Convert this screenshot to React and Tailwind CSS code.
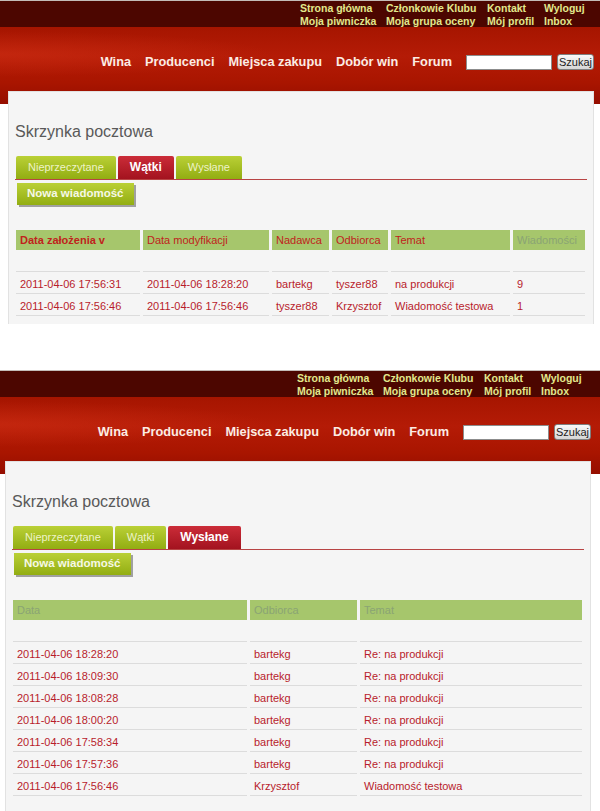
import React from "react";

const topLinks = [
  "Strona główna",
  "Członkowie Klubu",
  "Kontakt",
  "Wyloguj",
  "Moja piwniczka",
  "Moja grupa oceny",
  "Mój profil",
  "Inbox",
];

const mainNav = ["Wina", "Producenci", "Miejsca zakupu", "Dobór win", "Forum"];

const tabs = ["Nieprzeczytane", "Wątki", "Wysłane"];

const threadColumns = [
  { label: "Data założenia v", width: "w-[124px]", tone: "font-bold text-[#c0231c]" },
  { label: "Data modyfikacji", width: "w-[126px]", tone: "text-[#c0231c]" },
  { label: "Nadawca", width: "w-[57px]", tone: "text-[#c0231c]" },
  { label: "Odbiorca", width: "w-[56px]", tone: "text-[#c0231c]" },
  { label: "Temat", width: "w-[119px]", tone: "text-[#c0231c]" },
  { label: "Wiadomości", width: "w-[72px]", tone: "text-[#8aa474]" },
];

const threadRows = [
  ["2011-04-06 17:56:31", "2011-04-06 18:28:20", "bartekg", "tyszer88", "na produkcji", "9"],
  ["2011-04-06 17:56:46", "2011-04-06 17:56:46", "tyszer88", "Krzysztof", "Wiadomość testowa", "1"],
];

const sentColumns = [
  { label: "Data", width: "w-[234px]", tone: "text-[#8aa474]" },
  { label: "Odbiorca", width: "w-[107px]", tone: "text-[#8aa474]" },
  { label: "Temat", width: "w-[222px]", tone: "text-[#8aa474]" },
];

const sentRows = [
  ["2011-04-06 18:28:20", "bartekg", "Re: na produkcji"],
  ["2011-04-06 18:09:30", "bartekg", "Re: na produkcji"],
  ["2011-04-06 18:08:28", "bartekg", "Re: na produkcji"],
  ["2011-04-06 18:00:20", "bartekg", "Re: na produkcji"],
  ["2011-04-06 17:58:34", "bartekg", "Re: na produkcji"],
  ["2011-04-06 17:57:36", "bartekg", "Re: na produkcji"],
  ["2011-04-06 17:56:46", "Krzysztof", "Wiadomość testowa"],
];

const Header = () => (
  <div>
    <div className="border-t border-[#c4bcb8] bg-[#4c0600] h-[27px] flex justify-end pr-[14px] pt-[1px]">
      <div className="grid grid-cols-[86px_101px_57px_45px] leading-[12.5px] text-[10.5px] font-bold text-[#e2e88c] whitespace-nowrap">
        {topLinks.map((link) => (
          <a key={link} href="#" className="cursor-pointer">
            {link}
          </a>
        ))}
      </div>
    </div>
    <div className="h-[77px] bg-[radial-gradient(ellipse_at_0%_35%,rgba(214,52,24,0.45),transparent_32%),linear-gradient(180deg,#a61500_0%,#b41b06_38%,#a91500_72%,#950e00_100%)] flex justify-end items-start pt-[27px] pr-[9px]">
      <div className="flex items-center h-[16px]">
        <nav className="flex gap-[14px] text-[12.75px] leading-[16px] font-bold text-[#fcece4]">
          {mainNav.map((item) => (
            <a key={item} href="#">
              {item}
            </a>
          ))}
        </nav>
        <input
          type="text"
          className="ml-[14px] w-[86px] h-[15px] bg-white border border-[#8c8c8c] outline-none"
        />
        <button className="ml-[5px] w-[37px] h-[16px] p-0 rounded-[3px] border border-[#7f7f7f] bg-[linear-gradient(180deg,#f8f8f8,#d6d6d6)] text-[11px] leading-[14px] text-[#222]">
          Szukaj
        </button>
      </div>
    </div>
  </div>
);

const Tabs = ({ active }) => (
  <div className="flex gap-[2px] pl-[1px] border-b border-[#b84444]">
    {tabs.map((tab) =>
      tab === active ? (
        <div
          key={tab}
          className="h-[23px] px-[12px] leading-[23px] rounded-t-[2px] bg-[linear-gradient(180deg,#cb2c38,#a3131f)] text-[12px] font-bold text-white"
        >
          {tab}
        </div>
      ) : (
        <div
          key={tab}
          className="h-[23px] px-[12px] leading-[23px] rounded-t-[2px] bg-[linear-gradient(180deg,#bad036,#92ad12)] text-[11px] text-[#eef3c8]"
        >
          {tab}
        </div>
      )
    )}
  </div>
);

const MessageTable = ({ columns, rows }) => (
  <table className="table-fixed w-[575px] -ml-[2px] mt-[25px] border-separate border-spacing-x-[3px] border-spacing-y-0">
    <thead>
      <tr className="h-[20px]">
        {columns.map((col) => (
          <th
            key={col.label}
            className={`${col.width} ${col.tone} bg-[#a6c66c] text-left font-normal text-[11px] p-0 pl-[4px] whitespace-nowrap`}
          >
            <span className={col.tone}>{col.label}</span>
          </th>
        ))}
      </tr>
    </thead>
    <tbody>
      <tr className="h-[22px]">
        {columns.map((col) => (
          <td key={col.label} className="border-b border-[#dcdcdc] p-0"></td>
        ))}
      </tr>
      {rows.map((row, i) => (
        <tr key={i} className="h-[22px]">
          {row.map((cell, j) => (
            <td
              key={j}
              className="border-b border-[#dcdcdc] p-0 pl-[4px] pt-[3px] text-[11px] text-[#b81c2c] whitespace-nowrap"
            >
              {cell}
            </td>
          ))}
        </tr>
      ))}
    </tbody>
  </table>
);

const MailboxPage = ({ shift, active, columns, rows }) => (
  <div className={`w-[603px] ${shift}`}>
    <Header />
    <div className="-mt-[13px] ml-[8px] mr-[9px] border border-[#e2e2e2] bg-[#f5f5f5] px-[6px] pb-[40px]">
      <h1 className="mt-[30px] h-[20px] leading-[20px] text-[16px] text-[#595959]">
        Skrzynka pocztowa
      </h1>
      <div className="mt-[14px]">
        <Tabs active={active} />
      </div>
      <button className="mt-[3px] ml-[2px] h-[22px] px-[10px] bg-[linear-gradient(180deg,#bad036,#92ad12)] shadow-[2px_2px_0_#a0a0a0] text-[11.5px] font-bold text-[#f6f8e6]">
        Nowa wiadomość
      </button>
      <MessageTable columns={columns} rows={rows} />
    </div>
  </div>
);

export default function App() {
  return (
    <div className="w-[600px] h-[811px] bg-white overflow-hidden font-['Liberation_Sans',Arial,sans-serif]">
      <div className="h-[324px] overflow-hidden">
        <MailboxPage shift="ml-0" active="Wątki" columns={threadColumns} rows={threadRows} />
      </div>
      <div className="h-[46px]"></div>
      <div className="h-[441px] overflow-hidden">
        <MailboxPage shift="-ml-[3px]" active="Wysłane" columns={sentColumns} rows={sentRows} />
      </div>
    </div>
  );
}
